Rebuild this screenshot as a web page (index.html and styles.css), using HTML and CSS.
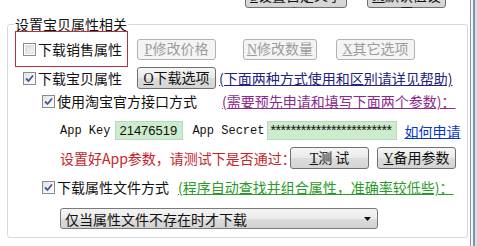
FILE: index.html
```html
<!DOCTYPE html>
<html lang="zh-CN">
<head>
    <meta charset="UTF-8">
    <title>设置宝贝属性相关</title>
    <link rel="stylesheet" href="styles.css">
</head>
<body>
<div class="window">
    <div class="main">
        <div class="topbar">
            <button class="btn btn-top1"><u>S</u>设置自定义字段</button>
            <button class="btn btn-top2"><u>M</u>默认值设置</button>
        </div>

        <fieldset class="group">
            <legend>设置宝贝属性相关</legend>

            <div class="row row1">
                <div class="redbox">
                    <span class="cb"></span>
                    <span class="lbl">下载销售属性</span>
                </div>
                <button class="btn btn-p" disabled><u>P</u>修改价格</button>
                <button class="btn btn-n" disabled><u>N</u>修改数量</button>
                <button class="btn btn-x" disabled><u>X</u>其它选项</button>
            </div>

            <div class="row row2">
                <div class="check check-main">
                    <span class="cb checked"><svg width="9" height="9" viewBox="0 0 9 9"><path d="M1 4.5 L3.5 7 L8 1.5" fill="none" stroke="#3d5896" stroke-width="1.8"/></svg></span>
                    <span class="lbl">下载宝贝属性</span>
                </div>
                <button class="btn btn-o"><u>O</u>下载选项</button>
                <a class="link link-navy" href="#">(下面两种方式使用和区别请详见帮助)</a>
            </div>

            <div class="row row3">
                <div class="check check-sub">
                    <span class="cb checked"><svg width="9" height="9" viewBox="0 0 9 9"><path d="M1 4.5 L3.5 7 L8 1.5" fill="none" stroke="#3d5896" stroke-width="1.8"/></svg></span>
                    <span class="lbl">使用淘宝官方接口方式</span>
                </div>
                <a class="link link-purple" href="#">(需要预先申请和填写下面两个参数)：</a>
            </div>

            <div class="row row4">
                <span class="mono">App Key</span>
                <span class="field field-key">21476519</span>
                <span class="mono mono-secret">App Secret</span>
                <span class="field field-secret">************************</span>
                <a class="link link-blue" href="#">如何申请</a>
            </div>

            <div class="row row5">
                <span class="warn">设置好App参数，请测试下是否通过：</span>
                <button class="btn btn-t"><u>T</u>测 试</button>
                <button class="btn btn-y"><u>Y</u>备用参数</button>
            </div>

            <div class="row row6">
                <div class="check check-file">
                    <span class="cb checked"><svg width="9" height="9" viewBox="0 0 9 9"><path d="M1 4.5 L3.5 7 L8 1.5" fill="none" stroke="#3d5896" stroke-width="1.8"/></svg></span>
                    <span class="lbl">下载属性文件方式</span>
                </div>
                <a class="link link-green" href="#">(程序自动查找并组合属性，准确率较低些)：</a>
            </div>

            <div class="row row7">
                <div class="select">
                    <span>仅当属性文件不存在时才下载</span>
                    <svg width="7" height="4" viewBox="0 0 7 4"><path d="M0 0 H7 L3.5 4 Z" fill="#111"/></svg>
                </div>
            </div>
        </fieldset>
    </div>
    <div class="edge"></div>
</div>
</body>
</html>
```

FILE: styles.css
```css
body {
    margin: 0;
    background-color: #fff;
    font-family: "Noto Sans CJK SC", "Liberation Sans", sans-serif;
    font-size: 14px;
    line-height: 16px;
    color: #111;
}
.window {
    display: flex;
    height: 246px;
    overflow: hidden;
}
.main {
    width: 470px;
    flex: none;
}
.edge {
    width: 7px;
    flex: none;
    background: linear-gradient(to right, #8d959c 0, #8d959c 1px, #f4f6f8 1px, #f4f6f8 3px, #7f93a8 3px, #7f93a8 5px, #d5e4f2 5px);
}
.topbar {
    height: 8px;
    overflow: hidden;
    display: flex;
    align-items: flex-end;
}
.btn {
    font-family: "Noto Sans CJK SC", "Liberation Sans", sans-serif;
    font-size: 14px;
    line-height: 16px;
    height: 21px;
    padding: 0;
    border: 1px solid #707070;
    border-radius: 3px;
    background: linear-gradient(#f6f6f6, #e9e9e9 50%, #dcdcdc 51%, #d4d4d4);
    color: #111;
    flex: none;
}
.btn u {
    font-family: "Liberation Serif", serif;
}
.btn:disabled {
    border-color: #adb2b5;
    background: #f4f4f4;
    color: #9c9c9c;
}
.btn-top1 {
    width: 102px;
    margin-left: 245px;
    height: 22px;
}
.btn-top2 {
    width: 79px;
    margin-left: 20px;
    height: 22px;
}
.group {
    margin: 9px 2px 0 7px;
    padding: 0 7px 8px 7px;
    border: 1px solid #d5dadf;
    border-radius: 3px;
    display: flex;
    flex-direction: column;
}
.group legend {
    padding: 0 1px;
    margin-left: -1px;
    line-height: 14px;
    color: #111;
}
.row {
    display: flex;
    align-items: center;
    white-space: nowrap;
}
.row1 {
    height: 36px;
}
.redbox {
    height: 34px;
    width: 104px;
    border: 1px solid #b5323a;
    display: flex;
    align-items: center;
    padding-left: 7px;
    box-sizing: content-box;
}
.cb {
    width: 11px;
    height: 11px;
    border: 1px solid #8a8a8a;
    background: linear-gradient(135deg, #d8d8d8, #f6f6f6);
    box-shadow: inset 0 0 0 1px #fff, inset 0 0 0 2px #e0e0e0;
    display: flex;
    align-items: center;
    justify-content: center;
    flex: none;
    margin-right: 2px;
}
.cb.checked {
    background: linear-gradient(135deg, #e4e4e4, #fff);
    box-shadow: none;
}
.btn-p {
    width: 79px;
    margin-left: 9px;
}
.btn-n {
    width: 74px;
    margin-left: 27px;
}
.btn-x {
    width: 79px;
    margin-left: 19px;
}
.row2 {
    height: 22px;
}
.check {
    display: flex;
    align-items: center;
    flex: none;
}
.check-main {
    margin-left: 8px;
    width: 114px;
}
.btn-o {
    width: 79px;
    height: 22px;
}
.link {
    text-decoration: underline;
}
.link-navy {
    color: #23237e;
    margin-left: 3px;
}
.row3 {
    height: 24px;
}
.check-sub {
    margin-left: 27px;
    width: 180px;
}
.link-purple {
    color: #8c2a8c;
}
.row4 {
    height: 21px;
    margin-top: 7px;
    padding-left: 45px;
}
.mono {
    font-family: "Liberation Mono", monospace;
    font-size: 12px;
    color: #111;
}
.field {
    height: 19px;
    box-sizing: border-box;
    border: 1px solid #bcd8bc;
    background-color: #cdebcd;
    font-family: "Liberation Sans", sans-serif;
    font-size: 13px;
    line-height: 17px;
    padding-left: 3px;
    color: #111;
}
.field-key {
    width: 68px;
    margin-left: 5px;
}
.mono-secret {
    margin-left: 9px;
}
.field-secret {
    width: 130px;
    margin-left: 3px;
    padding-left: 2px;
    font-size: 14px;
    letter-spacing: -0.4px;
    overflow: hidden;
}
.link-blue {
    color: #0836c8;
    margin-left: 7px;
}
.row5 {
    height: 22px;
    margin-top: 6px;
    padding-left: 45px;
}
.warn {
    color: #c8232a;
    width: 230px;
}
.btn-t {
    width: 79px;
    height: 22px;
}
.btn-y {
    width: 79px;
    height: 22px;
    margin-left: 8px;
}
.row6 {
    height: 20px;
    margin-top: 8px;
}
.check-file {
    margin-left: 27px;
    width: 136px;
}
.link-green {
    color: #2a9a2a;
}
.row7 {
    height: 21px;
    margin-top: 11px;
    padding-left: 45px;
}
.select {
    width: 318px;
    height: 21px;
    box-sizing: border-box;
    border: 1px solid #7a7a7a;
    border-radius: 3px;
    background: linear-gradient(#f4f4f4, #ebebeb 50%, #dddddd 51%, #d2d2d2);
    display: flex;
    align-items: center;
    justify-content: space-between;
    padding: 0 6px 0 4px;
}
```
